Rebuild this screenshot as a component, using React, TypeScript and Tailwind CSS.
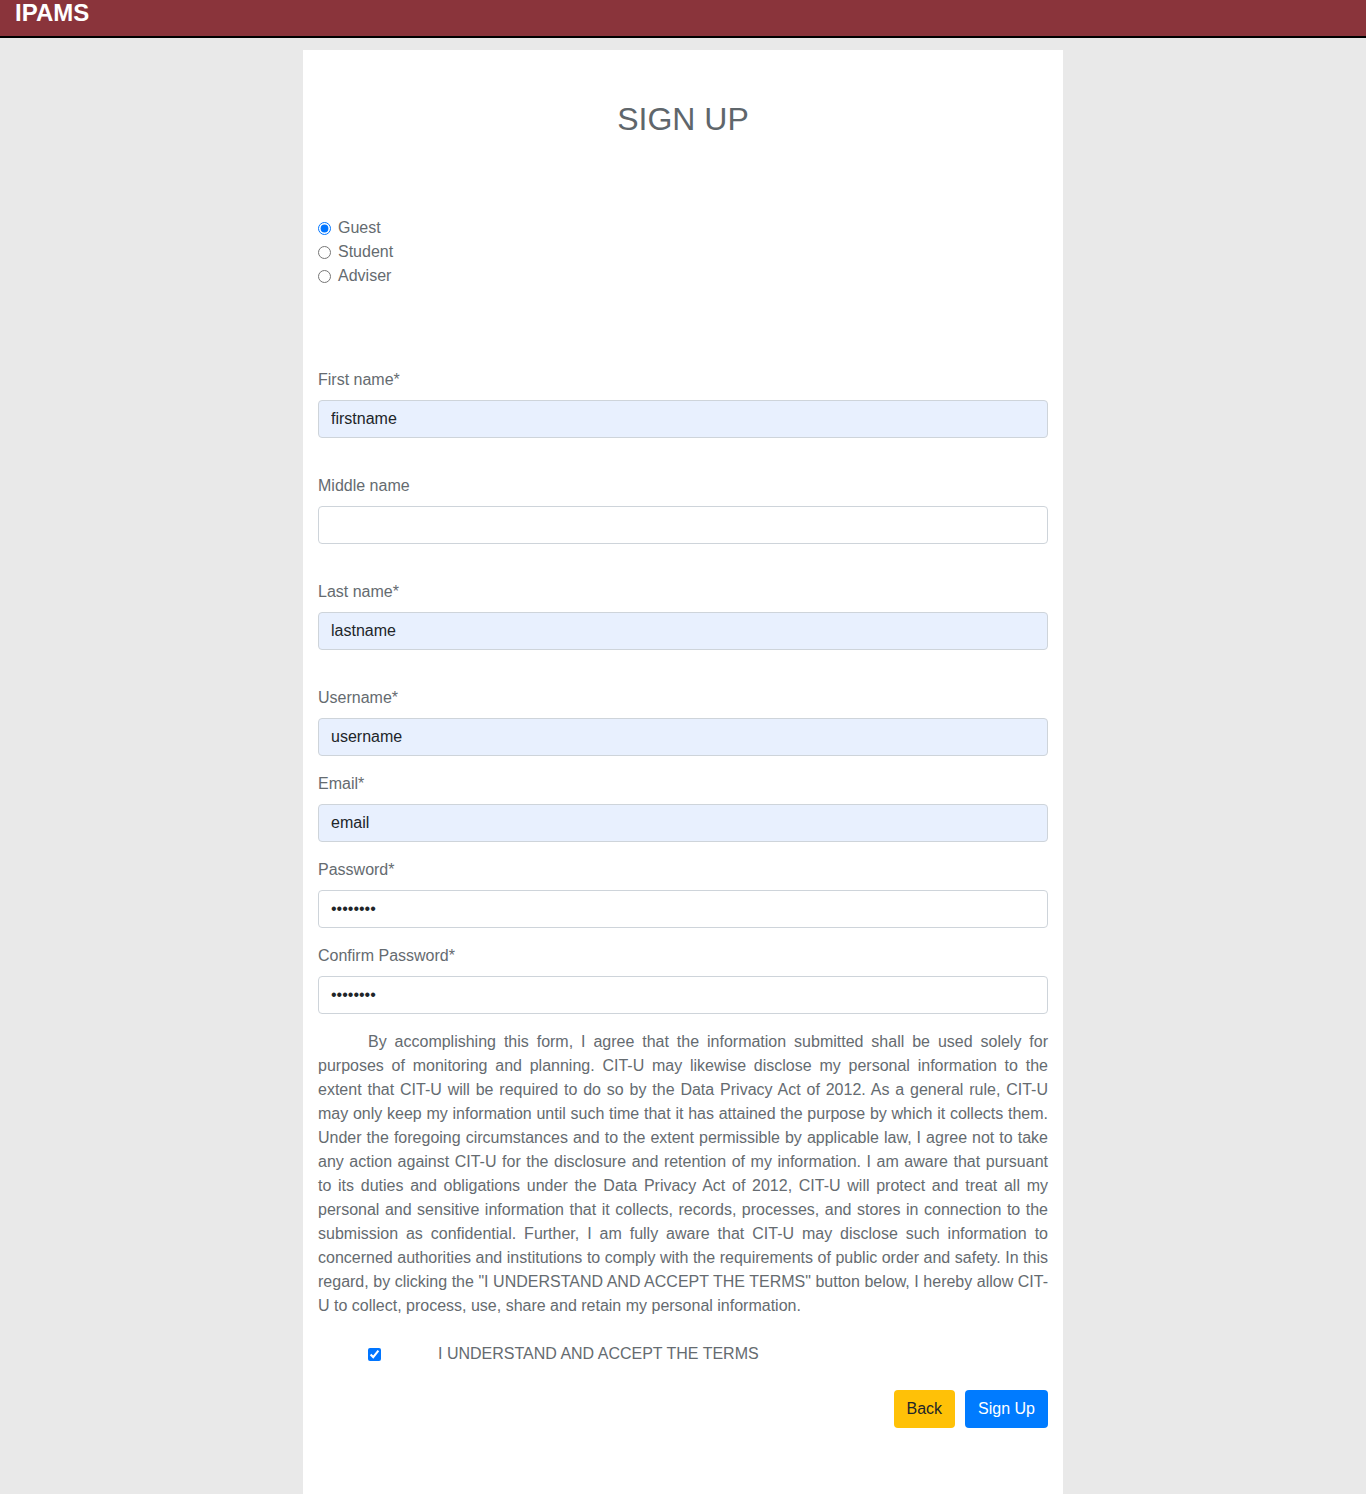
import React, { useState } from 'react';

const font = { fontFamily: '"Liberation Sans", Arial, sans-serif' };

function Field({ label, value, type = 'text', gap }: { label: string; value: string; type?: string; gap: string }) {
  const filled = type !== 'password' && value !== '';
  return (
    <div className={gap}>
      <label className="block mb-2 text-base leading-6 text-[#656b70]">{label}</label>
      <input
        type={type}
        defaultValue={value}
        className={`block w-full h-[38px] px-3 rounded border border-[#ced4da] text-base text-[#212529] outline-none ${
          filled ? 'bg-[#e8f0fe]' : 'bg-white'
        }`}
        style={font}
      />
    </div>
  );
}

export default function App() {
  const [role, setRole] = useState('guest');
  const [accepted, setAccepted] = useState(true);

  return (
    <div className="min-h-[1494px] bg-[#e9e9e9]" style={font}>
      <header className="h-[38px] bg-[#8a343b] border-b-2 border-black px-[15px]">
        <h1 className="text-2xl leading-[26px] font-bold text-white">IPAMS</h1>
      </header>

      <div className="mx-auto mt-[12px] w-[760px] min-h-[1444px] bg-white px-[15px] pt-[50px] pb-16">
        <h2 className="text-center text-[32px] leading-[38px] text-[#5f666b]">SIGN UP</h2>

        <div className="mt-[78px] flex flex-col">
          {[
            ['guest', 'Guest'],
            ['student', 'Student'],
            ['adviser', 'Adviser'],
          ].map(([key, name]) => (
            <label key={key} className="flex items-center h-6 text-base text-[#656b70]">
              <input
                type="radio"
                name="role"
                checked={role === key}
                onChange={() => setRole(key)}
                className="m-0 w-[13px] h-[13px] mr-[7px]"
              />
              {name}
            </label>
          ))}
        </div>

        <Field label="First name*" value="firstname" gap="mt-[80px]" />
        <Field label="Middle name" value="" gap="mt-[36px]" />
        <Field label="Last name*" value="lastname" gap="mt-[36px]" />
        <Field label="Username*" value="username" gap="mt-[36px]" />
        <Field label="Email*" value="email" gap="mt-[16px]" />
        <Field label="Password*" value="password" type="password" gap="mt-[16px]" />
        <Field label="Confirm Password*" value="password" type="password" gap="mt-[16px]" />

        <p className="mt-[16px] text-base leading-6 text-[#656b70] text-justify indent-[50px]">
          By accomplishing this form, I agree that the information submitted shall be used solely for purposes of
          monitoring and planning. CIT-U may likewise disclose my personal information to the extent that CIT-U will be
          required to do so by the Data Privacy Act of 2012. As a general rule, CIT-U may only keep my information until
          such time that it has attained the purpose by which it collects them. Under the foregoing circumstances and to
          the extent permissible by applicable law, I agree not to take any action against CIT-U for the disclosure and
          retention of my information. I am aware that pursuant to its duties and obligations under the Data Privacy Act
          of 2012, CIT-U will protect and treat all my personal and sensitive information that it collects, records,
          processes, and stores in connection to the submission as confidential. Further, I am fully aware that CIT-U may
          disclose such information to concerned authorities and institutions to comply with the requirements of public
          order and safety. In this regard, by clicking the "I UNDERSTAND AND ACCEPT THE TERMS" button below, I hereby
          allow CIT-U to collect, process, use, share and retain my personal information.
        </p>

        <label className="mt-6 flex items-center h-6 pl-[50px] text-base text-[#656b70]">
          <input
            type="checkbox"
            checked={accepted}
            onChange={(e) => setAccepted(e.target.checked)}
            className="m-0 w-[13px] h-[13px]"
          />
          <span className="ml-[57px]">I UNDERSTAND AND ACCEPT THE TERMS</span>
        </label>

        <div className="mt-[24px] flex justify-end gap-[10px]">
          <button className="h-[38px] px-[13px] rounded bg-[#ffc107] text-base text-[#212529]">Back</button>
          <button className="h-[38px] px-[13px] rounded bg-[#007bff] text-base text-white">Sign Up</button>
        </div>
      </div>
    </div>
  );
}
